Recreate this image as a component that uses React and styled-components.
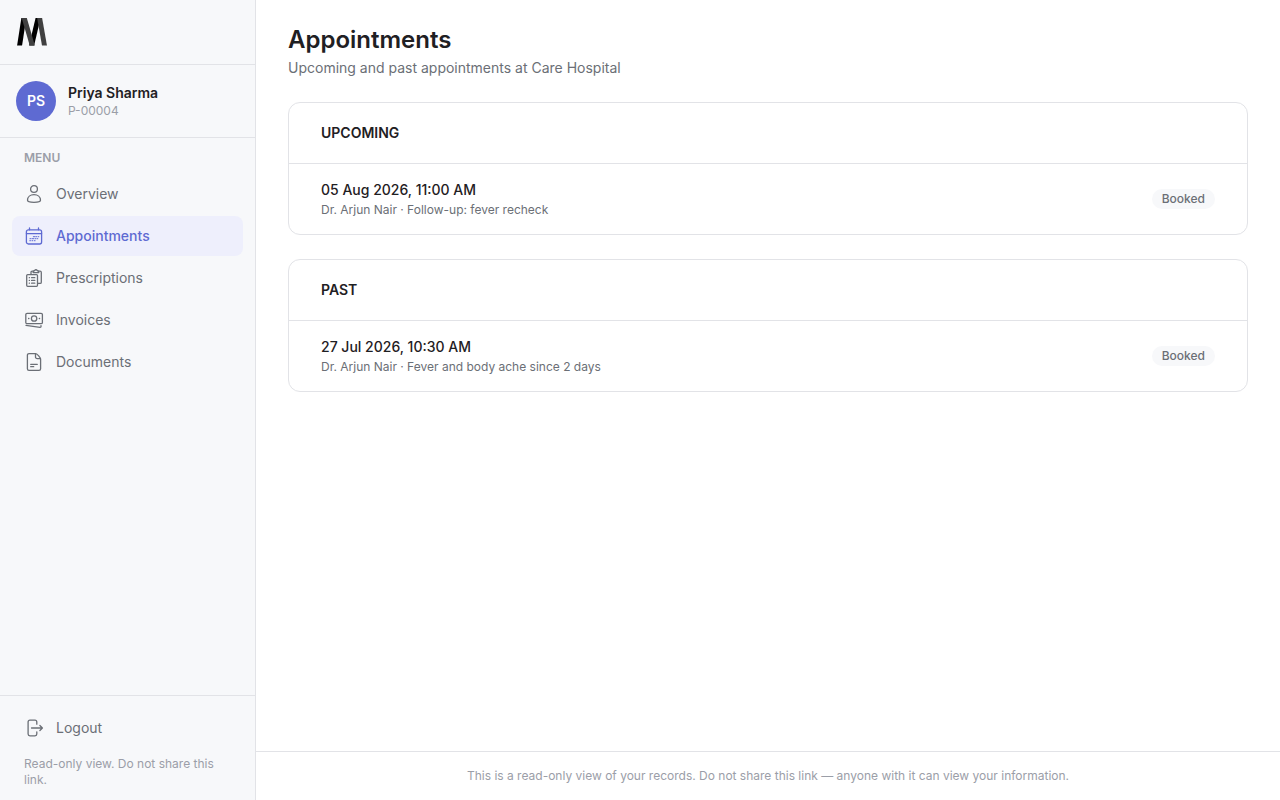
import React from 'react'
import styled, { createGlobalStyle } from 'styled-components'

const GlobalStyle = createGlobalStyle`
  * {
    box-sizing: border-box;
  }

  body {
    margin: 0;
    background: #ffffff;
    color: #1f2023;
    font-family: Inter, 'Liberation Sans', sans-serif;
    font-size: 14px;
    line-height: 20px;
  }

  h1, h2, p, ul {
    margin: 0;
    padding: 0;
  }

  ul {
    list-style: none;
  }
`

const Layout = styled.div`
  display: flex;
  min-height: 100vh;
`

const Sidebar = styled.aside`
  display: flex;
  flex-direction: column;
  flex: 0 0 256px;
  background: #f7f8fa;
  border-right: 1px solid #e2e3e7;
`

const Brand = styled.div`
  display: flex;
  padding: 16px;
  border-bottom: 1px solid #e2e3e7;
`

const Profile = styled.div`
  display: flex;
  align-items: center;
  gap: 12px;
  padding: 16px;
  border-bottom: 1px solid #e2e3e7;
`

const Avatar = styled.div`
  display: flex;
  align-items: center;
  justify-content: center;
  width: 40px;
  height: 40px;
  border-radius: 50%;
  background: #5e6ad2;
  color: #ffffff;
  font-weight: 600;
`

const ProfileName = styled.p`
  font-weight: 600;
`

const ProfileId = styled.p`
  color: #9b9ea8;
  font-size: 12px;
  line-height: 16px;
`

const Nav = styled.nav`
  flex: 1;
  padding: 12px;
`

const NavTitle = styled.h2`
  padding: 0 12px;
  margin-bottom: 8px;
  color: #9b9ea8;
  font-size: 12px;
  line-height: 16px;
  font-weight: 600;
`

const NavList = styled.ul`
  display: flex;
  flex-direction: column;
  gap: 2px;
`

const NavLink = styled.a`
  display: flex;
  align-items: center;
  gap: 12px;
  padding: 10px 12px;
  border-radius: 8px;
  background: ${({ $active }) => ($active ? '#eeeffc' : 'transparent')};
  color: ${({ $active }) => ($active ? '#5e6ad2' : '#6b6f76')};
  font-weight: ${({ $active }) => ($active ? 500 : 400)};
  text-decoration: none;
`

const SidebarFooter = styled.div`
  padding: 12px;
  border-top: 1px solid #e2e3e7;
`

const LogoutButton = styled.button`
  display: flex;
  align-items: center;
  gap: 12px;
  width: 100%;
  padding: 10px 12px;
  border: 0;
  border-radius: 8px;
  background: transparent;
  color: #6b6f76;
  font: inherit;
  cursor: pointer;
`

const SidebarNote = styled.p`
  padding: 8px 12px 0;
  color: #9b9ea8;
  font-size: 12px;
  line-height: 16px;
`

const Content = styled.div`
  display: flex;
  flex-direction: column;
  flex: 1;
  min-width: 0;
`

const Main = styled.main`
  display: flex;
  flex-direction: column;
  flex: 1;
  gap: 24px;
  padding: 24px 32px;
`

const PageTitle = styled.h1`
  font-size: 24px;
  line-height: 32px;
  font-weight: 600;
`

const PageSubtitle = styled.p`
  margin-top: 2px;
  color: #6b6f76;
`

const Card = styled.section`
  border: 1px solid #e2e3e7;
  border-radius: 12px;
`

const CardTitle = styled.h2`
  padding: 20px 32px;
  border-bottom: 1px solid #e2e3e7;
  font-size: 14px;
  line-height: 20px;
  font-weight: 600;
  text-transform: uppercase;
`

const AppointmentRow = styled.li`
  display: flex;
  align-items: center;
  justify-content: space-between;
  gap: 16px;
  padding: 16px 32px;
`

const AppointmentTime = styled.p`
  font-weight: 500;
`

const AppointmentInfo = styled.p`
  margin-top: 2px;
  color: #6b6f76;
  font-size: 12px;
  line-height: 16px;
`

const Badge = styled.span`
  padding: 2px 10px;
  border-radius: 10px;
  background: #f7f8fa;
  color: #6b6f76;
  font-size: 12px;
  line-height: 16px;
  font-weight: 500;
`

const PageFooter = styled.footer`
  padding: 16px 32px;
  border-top: 1px solid #e2e3e7;
  color: #9b9ea8;
  font-size: 12px;
  line-height: 16px;
  text-align: center;
`

const IconSvg = styled.svg`
  flex: none;
  width: 20px;
  height: 20px;
  fill: none;
  stroke: currentColor;
  stroke-width: 1.3;
  stroke-linecap: round;
  stroke-linejoin: round;
`

const Icon = ({ children }) => (
  <IconSvg viewBox='0 0 20 20' aria-hidden='true'>{children}</IconSvg>
)

const Logo = () => (
  <svg width='32' height='32' viewBox='0 0 32 32' role='img' aria-label='Logo'>
    <svg x='0' y='2' width='32' height='27.4' viewBox='0 2 32 27.4' strokeWidth='4.9'>
      <path d='M3.2 32L8.3 -1' stroke='#000000' />
      <path d='M15 32L22.8 -1' stroke='#000000' />
      <path d='M7.4 -1L17 32' stroke='#404040' />
      <path d='M23.1 -1L28.9 32' stroke='#404040' />
    </svg>
  </svg>
)

const UserIcon = () => (
  <Icon>
    <circle cx='10' cy='5' r='3.4' />
    <path d='M10 10.7c-3.7 0-6.5 2.3-6.5 5.6 0 1.1 2.9 2 6.5 2s6.5-.9 6.5-2c0-3.3-2.8-5.6-6.5-5.6z' />
  </Icon>
)

const CalendarIcon = () => (
  <Icon>
    <rect x='2.4' y='3.8' width='15.2' height='14.2' rx='2' />
    <path d='M2.4 7.6h15.2M5.5 2v1.8M14.5 2v1.8' />
    <path d='M9.3 10.7h1.5M11.8 10.7h.8M14 10.7h.8M6 12.7h1M8.2 12.7h1.5M11 12.7h.8M13 12.7h.8M5.8 14.7h.7M8 14.7h.8M10.3 14.7h.8' strokeWidth='1' />
  </Icon>
)

const ClipboardIcon = () => (
  <Icon>
    <rect x='2.7' y='6.6' width='10.8' height='11.7' rx='1' />
    <path d='M7 6.3V4.4c0-.7.5-1.2 1.2-1.2h.9M14.8 3.2h1.3c.7 0 1.2.5 1.2 1.2v9.8c0 .7-.5 1.2-1.2 1.2h-2.3' />
    <path d='M9.1 4.6c0-1.4.6-2 1.6-2.1.5-1 2-1 2.5 0 1 .1 1.6.7 1.6 2.1z' />
    <path d='M5.3 9.7h.2M7.6 9.7h3.2M5.3 12.4h.2M7.6 12.4h3.2M5.3 15.2h.2M7.6 15.2h3.2' />
  </Icon>
)

const CashIcon = () => (
  <Icon>
    <rect x='1.8' y='3.3' width='16.6' height='10.4' rx='1.3' />
    <circle cx='10.1' cy='8.5' r='2.7' />
    <path d='M4.6 8.5h.3M15.3 8.5h.3M2 15.4l14 1.9c.6.1 1-.3 1-.9v-.8' />
  </Icon>
)

const DocumentIcon = () => (
  <Icon>
    <path d='M11.8 1.6H5c-.9 0-1.6.7-1.6 1.6v13.6c0 .9.7 1.6 1.6 1.6h10c.9 0 1.6-.7 1.6-1.6V7.2c0-1.3-3.5-5.6-4.8-5.6z' />
    <path d='M11.5 1.8v3.1c0 1 .7 1.7 1.7 1.7h3.1M6.7 12.3h6.6M6.7 14.7h3' />
  </Icon>
)

const LogoutIcon = () => (
  <Icon>
    <path d='M12.8 6.2V3.9c0-1.1-.7-1.8-1.8-1.8H5.9c-1.1 0-1.8.7-1.8 1.8v12.2c0 1.1.7 1.8 1.8 1.8H11c1.1 0 1.8-.7 1.8-1.8v-2.3' />
    <path d='M7.5 10h10.8M15.9 7.5l2.5 2.5-2.5 2.5' />
  </Icon>
)

const navItems = [
  { label: 'Overview', icon: UserIcon },
  { label: 'Appointments', icon: CalendarIcon, active: true },
  { label: 'Prescriptions', icon: ClipboardIcon },
  { label: 'Invoices', icon: CashIcon },
  { label: 'Documents', icon: DocumentIcon }
]

const upcoming = [
  { time: '05 Aug 2026, 11:00 AM', info: 'Dr. Arjun Nair · Follow-up: fever recheck', status: 'Booked' }
]

const past = [
  { time: '27 Jul 2026, 10:30 AM', info: 'Dr. Arjun Nair · Fever and body ache since 2 days', status: 'Booked' }
]

const AppointmentCard = ({ title, appointments }) => (
  <Card>
    <CardTitle>{title}</CardTitle>
    <ul>
      {appointments.map(({ time, info, status }) => (
        <AppointmentRow key={time}>
          <div>
            <AppointmentTime>{time}</AppointmentTime>
            <AppointmentInfo>{info}</AppointmentInfo>
          </div>
          <Badge>{status}</Badge>
        </AppointmentRow>
      ))}
    </ul>
  </Card>
)

const App = () => (
  <>
    <GlobalStyle />
    <Layout>
      <Sidebar>
        <Brand>
          <Logo />
        </Brand>
        <Profile>
          <Avatar>PS</Avatar>
          <div>
            <ProfileName>Priya Sharma</ProfileName>
            <ProfileId>P-00004</ProfileId>
          </div>
        </Profile>
        <Nav>
          <NavTitle>MENU</NavTitle>
          <NavList>
            {navItems.map(({ label, icon: ItemIcon, active }) => (
              <li key={label}>
                <NavLink href={`#${label.toLowerCase()}`} $active={active} aria-current={active ? 'page' : undefined}>
                  <ItemIcon />
                  {label}
                </NavLink>
              </li>
            ))}
          </NavList>
        </Nav>
        <SidebarFooter>
          <LogoutButton type='button'>
            <LogoutIcon />
            Logout
          </LogoutButton>
          <SidebarNote>Read-only view. Do not share this link.</SidebarNote>
        </SidebarFooter>
      </Sidebar>
      <Content>
        <Main>
          <header>
            <PageTitle>Appointments</PageTitle>
            <PageSubtitle>Upcoming and past appointments at Care Hospital</PageSubtitle>
          </header>
          <AppointmentCard title='Upcoming' appointments={upcoming} />
          <AppointmentCard title='Past' appointments={past} />
        </Main>
        <PageFooter>
          This is a read-only view of your records. Do not share this link — anyone with it can view your information.
        </PageFooter>
      </Content>
    </Layout>
  </>
)

export default App
